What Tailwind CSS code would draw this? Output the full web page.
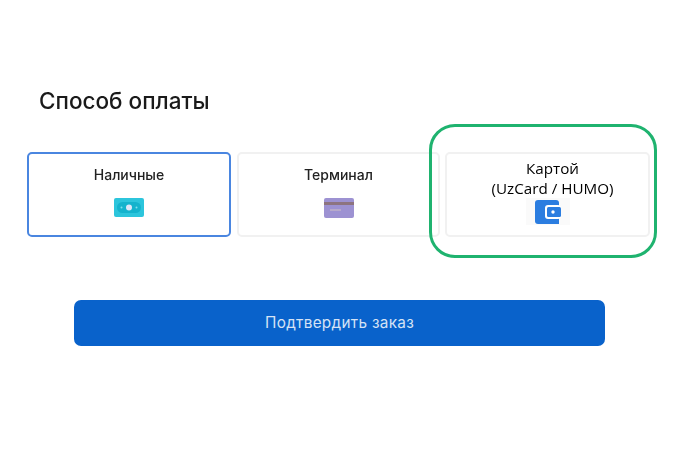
<!DOCTYPE html>
<html lang="ru">
<head>
  <meta charset="UTF-8" />
  <meta name="viewport" content="width=device-width, initial-scale=1.0"/>
  <title>Способ оплаты</title>
  <script src="https://cdn.jsdelivr.net/npm/@tailwindcss/browser@4"></script>
</head>
<body class="bg-white h-screen overflow-hidden font-['Inter',sans-serif]">

  <div class="relative h-full pt-[87px] pl-[27px] pr-[30px] blur-[0.4px]">
    <h1 class="pl-[12px] text-[22.5px] leading-[28px] font-medium text-[#1a1a1a]">Способ оплаты</h1>

    <div class="mt-[37px] flex gap-[6px]">
      <!-- Cash (selected) -->
      <div class="w-[204px] h-[85px] rounded-[5px] border-2 border-[#4a86e0] flex flex-col items-center pt-[12px]">
        <div class="text-[14px] leading-[18px] font-medium text-[#222]">Наличные</div>
        <svg class="mt-[14px]" width="30" height="19" viewBox="0 0 30 19">
          <rect width="30" height="19" rx="2" fill="#2cc5dc"/>
          <rect x="3" y="4" width="24" height="11" rx="5.5" fill="#14b3cd"/>
          <circle cx="15" cy="9.5" r="3" fill="#dfe6f7"/>
          <circle cx="7.5" cy="9.5" r="1" fill="#7fe0ec"/>
          <circle cx="22.5" cy="9.5" r="1" fill="#7fe0ec"/>
        </svg>
      </div>

      <!-- Terminal -->
      <div class="w-[203px] h-[85px] rounded-[5px] border-2 border-[#f1f1f1] flex flex-col items-center pt-[12px]">
        <div class="text-[14px] leading-[18px] font-medium text-[#222]">Терминал</div>
        <svg class="mt-[14px]" width="30" height="20" viewBox="0 0 30 20">
          <rect width="30" height="20" rx="2" fill="#9d92d2"/>
          <rect y="4" width="30" height="3" fill="#8d7480"/>
          <rect x="6" y="11" width="11" height="2" fill="#b7aacb"/>
        </svg>
      </div>

      <!-- Card -->
      <div class="ml-[-1px] w-[205px] h-[85px] rounded-[5px] border-2 border-[#f1f1f1] flex flex-col items-center pt-[4px]">
        <div class="pl-[10px] text-[15.2px] leading-[20px] text-black font-['Open_Sans',sans-serif] text-center">Картой<br>(UzCard / HUMO)</div>
        <div class="w-[44px] h-[27px] bg-[#fafafa] flex items-center justify-center">
          <svg width="26" height="24" viewBox="0 0 26 24">
            <path d="M3 0H21a3 3 0 0 1 3 3V24H3a3 3 0 0 1-3-3V3a3 3 0 0 1 3-3Z" fill="#2b7de0"/>
            <rect x="10" y="5" width="16" height="14" rx="3" fill="#fff"/>
            <rect x="12" y="7" width="14" height="10" rx="1.5" fill="#2b7de0"/>
            <circle cx="18" cy="12" r="1.7" fill="#fff"/>
          </svg>
        </div>
      </div>
    </div>

    <button class="mt-[63px] ml-[47px] w-[531px] h-[46px] pt-[1px] rounded-[7px] bg-[#0962cb] text-[#d5e2f5] text-[15.3px] tracking-[0.3px]">Подтвердить заказ</button>

    <!-- green highlight over the third card -->
    <div class="absolute left-[429px] top-[124px] w-[228px] h-[134px] rounded-[26px] border-[3px] border-[#1fb36f]"></div>
  </div>

</body>
</html>
